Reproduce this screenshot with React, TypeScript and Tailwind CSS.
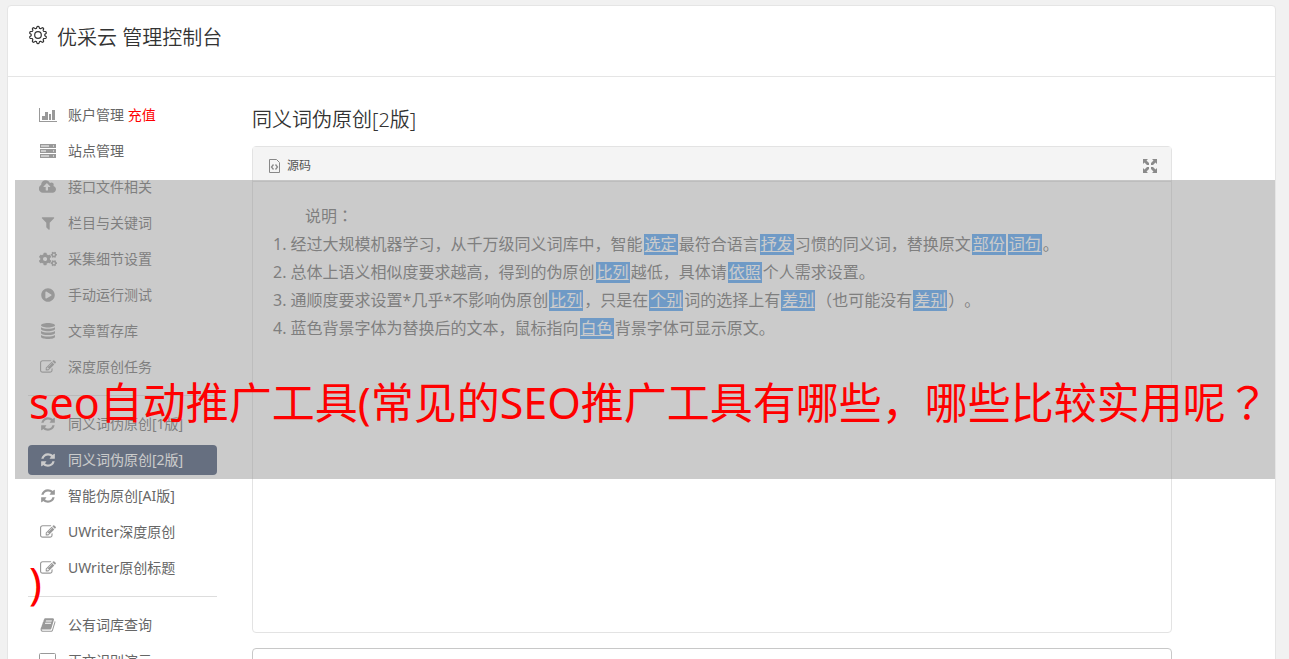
import React from "react";
import { FaCogs, FaPlayCircle } from "react-icons/fa";

function Glyph({ d, box = "0 0 1792 1792" }: { d: string; box?: string }) {
  return (
    <svg viewBox={box} className="h-4 w-[18px]" fill="currentColor" aria-hidden="true">
      <path d={d} />
    </svg>
  );
}

const REFRESH =
  "M1639 1056q0 5-1 7-64 268-268 434.5t-478 166.5q-146 0-282.5-55t-243.5-157l-129 129q-19 19-45 19t-45-19-19-45v-448q0-26 19-45t45-19h448q26 0 45 19t19 45-19 45l-137 137q71 66 161 102t187 36q134 0 250-65t186-179q11-17 53-117 8-23 30-23h192q13 0 22.5 9.5t9.5 22.5zm25-800v448q0 26-19 45t-45 19h-448q-26 0-45-19t-19-45 19-45l138-138q-148-137-349-137-134 0-250 65t-186 179q-11 17-53 117-8 23-30 23h-199q-13 0-22.5-9.5t-9.5-22.5v-7q65-268 270-434.5t480-166.5q146 0 284 55.5t245 156.5l130-129q19-19 45-19t45 19 19 45z";
const EDIT =
  "M888 1184l116-116-152-152-116 116v56h96v96h56zm440-720q-16-16-33 1l-350 350q-17 17-1 33t33-1l350-350q17-17 1-33zm80 594v190q0 119-84.5 203.5t-203.5 84.5h-832q-119 0-203.5-84.5t-84.5-203.5v-832q0-119 84.5-203.5t203.5-84.5h832q63 0 117 25 15 7 18 23 3 17-9 29l-49 49q-14 14-32 8-23-6-45-6h-832q-66 0-113 47t-47 113v832q0 66 47 113t113 47h832q66 0 113-47t47-113v-126q0-13 9-22l64-64q15-15 35-7t20 29zm-96-738l288 288-672 672h-288v-288zm444 132l-92 92-288-288 92-92q28-28 68-28t68 28l152 152q28 28 28 68t-28 68z";
const CLOUD =
  "M1216 864q0-14-9-23l-352-352q-9-9-23-9t-23 9l-351 351q-10 12-10 24 0 14 9 23t23 9h224v352q0 13 9.5 22.5t22.5 9.5h192q13 0 22.5-9.5t9.5-22.5v-352h224q13 0 22.5-9.5t9.5-22.5zm640 288q0 159-112.5 271.5t-271.5 112.5h-1088q-185 0-316.5-131.5t-131.5-316.5q0-130 70-240t188-165q-2-30-2-43 0-212 150-362t362-150q156 0 285.5 87t188.5 231q71-62 166-62 106 0 181 75t75 181q0 76-41 138 130 31 213.5 135.5t83.5 238.5z";
const FILTER =
  "M1595 295q17 41-14 70l-493 493v742q0 42-39 59-13 5-25 5-27 0-45-19l-256-256q-19-19-19-45v-486l-493-493q-31-29-14-70 17-39 59-39h1280q42 0 59 39z";
const BOOK =
  "M1703 478q40 57 18 129l-275 906q-19 64-76.5 107.5t-122.5 43.5h-923q-77 0-148.5-53.5t-99.5-131.5q-24-67-2-127 0-4 3-27t4-37q1-8-3-21.5t-3-19.5q2-11 8-21t16.5-23.5 16.5-23.5q23-38 45-91.5t30-91.5q3-10 .5-30t-.5-28q3-11 17-28t17-23q21-36 42-92t25-90q1-9-2.5-32t.5-28q4-13 22-30.5t22-22.5q19-26 42.5-84.5t27.5-96.5q1-8-3-25.5t-2-26.5q2-8 9-18t18-23 17-21q8-12 16.5-30.5t15-35 16-36 19.5-32 26.5-23.5 36-11.5 47.5 5.5l-1 3q38-9 51-9h761q74 0 114 56t18 130l-274 906q-36 119-71.5 153.5t-128.5 34.5h-869q-27 0-38 15-11 16-1 43 24 70 144 70h923q29 0 56-15.5t35-41.5l300-987q7-22 5-57 38 15 59 43zm-1064 2q-4 13 2 22.5t20 9.5h608q13 0 25.5-9.5t16.5-22.5l21-64q4-13-2-22.5t-20-9.5h-608q-13 0-25.5 9.5t-16.5 22.5zm-83 256q-4 13 2 22.5t20 9.5h608q13 0 25.5-9.5t16.5-22.5l21-64q4-13-2-22.5t-20-9.5h-608q-13 0-25.5 9.5t-16.5 22.5z";

const refresh = <Glyph d={REFRESH} />;
const edit = <Glyph d={EDIT} />;

const chart = (
  <svg viewBox="0 0 18 16" className="h-4 w-[18px]" fill="currentColor" aria-hidden="true">
    <path d="M0 1h1v13h17v1H0zM3 9h3v4H3zM6 5h3v8H6zM10 7h2v6h-2zM13 3h3v10h-3z" />
  </svg>
);
const server = (
  <svg viewBox="0 0 18 16" className="h-4 w-[18px]" fill="currentColor" fillRule="evenodd" aria-hidden="true">
    <path d="M1 1h16v4H1zM2 2.500v1h8v-1zM14 2.500h1v1h-1zM1 6h16v4H1zM2 7.500v1h5v-1zM14 7.500h1v1h-1zM1 11h16v4H1zM2 12.500v1h8v-1zM14 12.500h1v1h-1z" />
  </svg>
);
const database = (
  <svg viewBox="0 0 18 16" className="h-4 w-[18px]" fill="currentColor" aria-hidden="true">
    <path d="M9 0c4 0 7 1 7 2.300s-3 2.200-7 2.200-7-1-7-2.200S5 0 9 0zM2 4.300c3 2 11 2 14 0v1.800c0 1.200-3 2.200-7 2.200s-7-1-7-2.200zM2 8.100c3 2 11 2 14 0v1.800c0 1.200-3 2.200-7 2.200s-7-1-7-2.200zM2 11.900c3 2 11 2 14 0v1.800c0 1.300-3 2.300-7 2.300s-7-1-7-2.300z" />
  </svg>
);
const desktop = (
  <svg viewBox="0 0 18 16" className="h-4 w-[18px]" fill="none" stroke="currentColor" aria-hidden="true">
    <rect x="0.500" y="0.500" width="16" height="11" rx="1" />
    <path d="M5 15h8M9 12v3" />
  </svg>
);

// Outline of a gear with ten soft teeth, centred on (10, 10).
const GEAR = Array.from({ length: 120 }, (_, i) => {
  const a = (i / 120) * 2 * Math.PI - Math.PI / 2;
  const wave = Math.cos((i / 12) * 2 * Math.PI);
  const r = 7.7 + 0.95 * Math.tanh(wave * 2);
  return `${(10 + r * Math.cos(a)).toFixed(2)},${(10 + r * Math.sin(a)).toFixed(2)}`;
}).join(" ");

type Item = { label: string; icon: React.ReactNode; extra?: string; active?: boolean };

const groups: Item[][] = [
  [
    { label: "账户管理", icon: chart, extra: "充值" },
    { label: "站点管理", icon: server },
    { label: "接口文件相关", icon: <Glyph d={CLOUD} box="0 0 1920 1792" /> },
    { label: "栏目与关键词", icon: <Glyph d={FILTER} /> },
    { label: "采集细节设置", icon: <FaCogs className="h-4 w-[18px]" /> },
    { label: "手动运行测试", icon: <FaPlayCircle className="h-[14px] w-[18px]" /> },
    { label: "文章暂存库", icon: database },
    { label: "深度原创任务", icon: edit },
  ],
  [
    { label: "同义词伪原创[1版]", icon: refresh },
    { label: "同义词伪原创[2版]", icon: refresh, active: true },
    { label: "智能伪原创[AI版]", icon: refresh },
    { label: "UWriter深度原创", icon: edit },
    { label: "UWriter原创标题", icon: edit },
  ],
  [
    { label: "公有词库查询", icon: <Glyph d={BOOK} /> },
    { label: "正文识别演示", icon: desktop },
  ],
];

function NavItem({ label, icon, extra, active }: Item) {
  return (
    <li>
      <a
        href="#"
        aria-current={active ? "page" : undefined}
        className={
          active
            ? "flex h-[30px] items-center gap-[11px] rounded bg-[#354769] pl-[11px] text-white"
            : "flex h-[30px] items-center gap-[11px] rounded pl-[11px] text-[#666]"
        }
      >
        <span className={active ? "text-white" : "text-[#999]"}>{icon}</span>
        <span>
          {label}
          {extra && <span className="text-[#f00]"> {extra}</span>}
        </span>
      </a>
    </li>
  );
}

function Swap({ children }: { children: React.ReactNode }) {
  return (
    <a href="#" className="mx-px inline-block bg-[#479df5] px-px leading-[21px] text-white underline">
      {children}
    </a>
  );
}

function Centered({ children }: { children: React.ReactNode }) {
  return (
    <span lang="zh-TW" className="font-['Noto_Sans_CJK_TC',sans-serif] leading-none">
      {children}
    </span>
  );
}

export default function App() {
  return (
    <div className="relative h-screen overflow-hidden bg-[#f1f1f1] px-[7px] pt-[5px] font-['Noto_Sans','Noto_Sans_CJK_SC',sans-serif] text-sm text-[#666] [text-spacing-trim:space-all]">
      <div className="mr-[6px] min-h-screen rounded-t border border-[#e5e5e5] bg-white">
        <header className="flex h-[71px] items-start gap-[9px] border-b border-[#e5e5e5] pt-[17px] pl-5">
          <svg viewBox="0 0 20 20" className="mt-[2px] h-5 w-5" fill="none" stroke="#333" strokeWidth="1.200" strokeLinejoin="round" aria-hidden="true">
            <polygon points={GEAR} />
            <circle cx="10" cy="10" r="3.300" />
          </svg>
          <h1 className="text-[20px] leading-[30px] font-[350] text-[#333]">优采云 管理控制台</h1>
        </header>
        <div className="flex items-start">
          <nav className="w-[209px] shrink-0 pt-[23px] pl-5">
            {groups.map((items, i) => (
              <ul
                key={i}
                className={i === 0 ? "flex flex-col gap-[6px]" : "mt-[13px] flex flex-col gap-[6px] border-t border-[#ddd] pt-[13px]"}
              >
                {items.map((item) => (
                  <NavItem key={item.label} {...item} />
                ))}
              </ul>
            ))}
          </nav>
          <main className="min-w-0 flex-1 pt-7 pr-[103px] pl-[35px]">
            <h2 className="text-[20px] leading-[30px] font-[350] text-[#333]">同义词伪原创[2版]</h2>
            <section className="mt-[11px] min-h-[487px] rounded border border-[#e3e3e3]">
              <div className="flex h-[35px] items-center justify-between border-b border-[#e3e3e3] bg-[#f4f4f4] px-[14px] pt-[3px]">
                <button type="button" className="flex items-center gap-[6px] text-xs text-[#555]">
                  <svg viewBox="0 0 14 16" className="h-4 w-[14px]" fill="none" stroke="#888" aria-hidden="true">
                    <path d="M2.500 1.500h7l3 3v10h-10z" />
                    <path d="M6.500 6.500l-2 2.500 2 2.500M8.500 6.500l2 2.500-2 2.500" strokeWidth="1.300" />
                  </svg>
                  源码
                </button>
                <button type="button" aria-label="全屏">
                  <svg viewBox="0 0 14 14" className="h-[14px] w-[14px]" fill="#8a8a8a" aria-hidden="true">
                    <path d="M0 0h5L3.500 1.500 6 4v2H4L1.500 3.500 0 5zM14 0v5l-1.500-1.500L10 6H8V4l2.500-2.500L9 0zM0 14V9l1.500 1.500L4 8h2v2l-2.500 2.500L5 14zM14 14H9l1.500-1.500L8 10V8h2l2.500 2.500L14 9z" />
                  </svg>
                </button>
              </div>
              <div className="px-5 pt-5 text-base leading-7">
                <p className="pl-8">说明<Centered>：</Centered></p>
                <ol>
                  <li>1. 经过大规模机器学习，从千万级同义词库中，智能<Swap>选定</Swap>最符合语言<Swap>抒发</Swap>习惯的同义词，替换原文<Swap>部份</Swap><Swap>词句</Swap>。</li>
                  <li>2. 总体上语义相似度要求越高，得到的伪原创<Swap>比列</Swap>越低，具体请<Swap>依照</Swap>个人需求设置。</li>
                  <li>3. 通顺度要求设置*几乎*不影响伪原创<Swap>比列</Swap>，只是在<Swap>个别</Swap>词的选择上有<Swap>差别</Swap>（也可能没有<Swap>差别</Swap>）。</li>
                  <li>4. 蓝色背景字体为替换后的文本，鼠标指向<Swap>白色</Swap>背景字体可显示原文。</li>
                </ol>
              </div>
            </section>
            <section className="mt-[15px] h-20 rounded border border-[#c8c8c8]" />
          </main>
        </div>
      </div>
      <div className="absolute top-[180px] right-[14px] left-[15px] h-[299px] bg-[#979797]/50 pt-[133px] pl-[14px] text-[43px] leading-[180px] whitespace-nowrap text-[#f00]">
        <p>seo自动推广工具(常见的SEO推广工具有哪些，哪些比较实用呢<Centered>？</Centered></p>
        <p>)</p>
      </div>
    </div>
  );
}
